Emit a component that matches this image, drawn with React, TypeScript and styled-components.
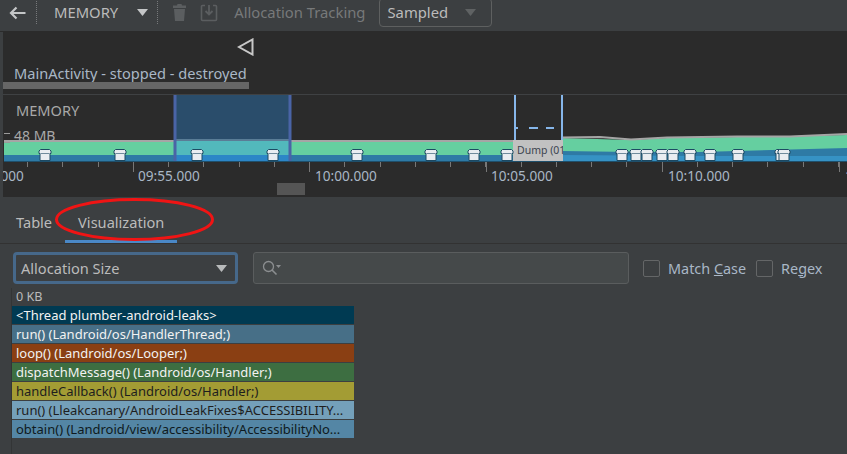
import styled, { createGlobalStyle } from 'styled-components';

const GlobalStyle = createGlobalStyle`
  html, body {
    margin: 0;
    padding: 0;
    background: #3c3f41;
  }
  * {
    box-sizing: border-box;
  }
`;

const Page = styled.div`
  width: 847px;
  height: 454px;
  overflow: hidden;
  display: flex;
  flex-direction: column;
  background: #3c3f41;
  color: #bbbbbb;
  font-family: 'Noto Sans', 'Open Sans', sans-serif;
  font-size: 14.6px;
`;

const Toolbar = styled.div`
  height: 32px;
  flex: none;
  display: flex;
  align-items: center;
  padding: 0 0 6px 9px;
  border-bottom: 1px solid #2b2b2b;
  font-size: 14.8px;
  line-height: 20px;
`;

const ToolbarIcon = styled.svg<{ $left?: number; $gap?: number }>`
  flex: none;
  margin-left: ${(p) => p.$left ?? 0}px;
  margin-right: ${(p) => p.$gap ?? 0}px;
`;

const DottedSep = styled.div`
  width: 1px;
  height: 23px;
  flex: none;
  border-left: 1px dotted #77797b;
`;

const ToolbarLabel = styled.span<{ $muted?: boolean; $left?: number; $gap?: number }>`
  white-space: nowrap;
  margin-left: ${(p) => p.$left ?? 0}px;
  margin-right: ${(p) => p.$gap ?? 0}px;
  padding-bottom: 2px;
  color: ${(p) => (p.$muted ? '#77797a' : '#bbbbbb')};
`;

const SmallSelect = styled.div`
  width: 113px;
  height: 29px;
  margin-left: 14px;
  flex: none;
  display: flex;
  align-items: center;
  justify-content: space-between;
  padding: 0 15px 0 7px;
  border: 1px solid #5e6060;
  border-radius: 4px;
`;

const SessionPanel = styled.div`
  height: 63px;
  flex: none;
  margin-left: 3px;
  background: #2b2b2b;
  display: flex;
  flex-direction: column;
  border-bottom: 1px solid #3f4143;
`;

const EventMark = styled.svg`
  margin: 6px 0 0 234px;
  flex: none;
`;

const ActivityLabel = styled.div`
  margin: 9px 0 0 11px;
  line-height: 17px;
  white-space: nowrap;
  color: #a9b7c6;
`;

const ActivityBar = styled.div`
  width: 246px;
  height: 7px;
  flex: none;
  background: #666666;
`;

const Timeline = styled.div`
  height: 102px;
  flex: none;
  margin-left: 3px;
  position: relative;
  overflow: hidden;
  background: #2b2b2b;
`;

const ChartSvg = styled.svg`
  position: absolute;
  left: -3px;
  top: 0;
`;

const MemoryTitle = styled.span`
  position: absolute;
  left: 13px;
  top: 5px;
  color: #a8a8a8;
`;

const ScaleLabel = styled.span`
  position: absolute;
  left: 11px;
  top: 33px;
  font-size: 14px;
  line-height: 16px;
  color: #a8a8a8;
`;

const TimeLabel = styled.span<{ $x: number }>`
  position: absolute;
  left: ${(p) => p.$x - 3}px;
  top: 72px;
  font-size: 13.6px;
  line-height: 18px;
  white-space: nowrap;
  color: #a9b7c6;
`;

const DumpLabel = styled.span`
  position: absolute;
  left: 511px;
  top: 47px;
  width: 49px;
  overflow: hidden;
  white-space: nowrap;
  font-size: 10.5px;
  line-height: 16px;
  padding-left: 3px;
  color: #3c4450;
`;

const Thumb = styled.div`
  position: absolute;
  left: 274px;
  top: 88px;
  width: 28px;
  height: 12px;
  background: #555555;
`;

const Details = styled.div`
  flex: 1;
  position: relative;
  display: flex;
  flex-direction: column;
`;

const TabBar = styled.div`
  height: 47px;
  flex: none;
  display: flex;
  border-bottom: 1px solid #323232;
  padding-left: 3px;
`;

const Tab = styled.div<{ $active?: boolean }>`
  display: flex;
  align-items: center;
  height: 46px;
  padding: 6px 13px 0;
  border-bottom: 3px solid ${(p) => (p.$active ? '#4a88c7' : 'transparent')};
`;

const FilterRow = styled.div`
  height: 44px;
  flex: none;
  display: flex;
  align-items: center;
  padding: 4px 0 0 13px;
`;

const ComboBox = styled.div`
  width: 225px;
  height: 32px;
  flex: none;
  display: flex;
  align-items: center;
  justify-content: space-between;
  padding: 0 8px 0 5px;
  border: 3px solid #46688a;
  border-radius: 4px;
`;

const SearchBox = styled.div`
  width: 376px;
  height: 32px;
  flex: none;
  margin: 0 14px 0 15px;
  display: flex;
  align-items: center;
  padding-left: 8px;
  background: #45494a;
  border: 1px solid #5a5d5e;
  border-radius: 3px;
`;

const CheckOption = styled.label`
  display: flex;
  align-items: center;
  gap: 8px;
  margin-right: 10px;
  font-size: 14.4px;
  white-space: nowrap;
  color: #a9b7c6;
`;

const CheckMark = styled.span`
  width: 17px;
  height: 17px;
  flex: none;
  border: 1px solid #646667;
  border-radius: 2px;
  background: #3c3f41;
`;

const FlameArea = styled.div`
  margin-left: 11px;
  border-left: 1px solid #333536;
  flex: 1;
`;

const ScaleText = styled.div`
  margin-left: 4px;
  font-size: 12.6px;
  line-height: 17px;
  height: 18px;
`;

const FlameRows = styled.div`
  width: 342px;
  display: flex;
  flex-direction: column;
  gap: 1px;
`;

const FlameRow = styled.div<{ $bg: string; $ink: string }>`
  height: 18px;
  padding: 0 4px;
  line-height: 18px;
  font-size: 13px;
  background: ${(p) => p.$bg};
  color: ${(p) => p.$ink};
  white-space: nowrap;
  overflow: hidden;
  text-overflow: ellipsis;
`;

const CallOut = styled.svg`
  position: absolute;
  left: 50px;
  top: 0;
`;

const TICKS = Array.from({ length: 24 }, (_, i) => 27 + i * 35.25);
const LONG_TICKS = [133, 309, 486, 662, 839];
const MARKERS = [45, 120, 197, 273, 357, 431, 474, 507, 622, 636, 647, 662, 673, 690, 710, 738, 781, 784];
const TIMES: [string, number][] = [
  ['09:50.000', -38],
  ['09:55.000', 138],
  ['10:00.000', 315],
  ['10:05.000', 491],
  ['10:10.000', 668],
  ['10:15.000', 845],
];
const FRAMES = [
  { bg: '#003a52', ink: '#f2f2f2', text: '<Thread plumber-android-leaks>' },
  { bg: '#476f87', ink: '#f2f2f2', text: 'run() (Landroid/os/HandlerThread;)' },
  { bg: '#8a3f13', ink: '#f2f2f2', text: 'loop() (Landroid/os/Looper;)' },
  { bg: '#3d6e41', ink: '#f2f2f2', text: 'dispatchMessage() (Landroid/os/Handler;)' },
  { bg: '#a39c34', ink: '#1e1e1e', text: 'handleCallback() (Landroid/os/Handler;)' },
  { bg: '#74a0ba', ink: '#1e1e1e', text: 'run() (Lleakcanary/AndroidLeakFixes$ACCESSIBILITY...' },
  { bg: '#5486a5', ink: '#0f1a20', text: 'obtain() (Landroid/view/accessibility/AccessibilityNo...' },
];

const Caret = ({ color, gap }: { color: string; gap?: number }) => (
  <ToolbarIcon width="11" height="7" viewBox="0 0 11 7" $gap={gap}>
    <path d="M0 0h11L5.500 7z" fill={color} />
  </ToolbarIcon>
);

const MemoryChart = () => (
  <ChartSvg width="847" height="102" viewBox="0 95 847 102">
    <path d="M4 141H514V162H4z" fill="#65cfa0" />
    <path d="M4 155H514V162H4z" fill="#2e7aa5" />
    <path d="M562 138L631 140L667 138L737 137L847 135V162H562z" fill="#65cfa0" />
    <path d="M562 151L631 152L700 152L847 148V162H562z" fill="#2e7aa5" />
    <path d="M562 155L700 156L847 156V162H562z" fill="#3692c4" />
    <path d="M4 141H514" stroke="#a5a5a5" strokeWidth="2" />
    <path d="M562 137.500L600 137L631 139.500L667 137.500L737 136.500L790 136.500L847 134" stroke="#a5a5a5" strokeWidth="2" fill="none" />
    <path d="M176 95H289V141H176z" fill="#2a4d6b" />
    <path d="M176 141H289V155H176z" fill="#52b9bc" />
    <path d="M176 155H289V162H176z" fill="#2c86c7" />
    <path d="M176 140H289" stroke="#5a7d96" strokeWidth="2" />
    <path d="M175 95V161M290 95V161" stroke="#4a64a6" strokeWidth="3" />
    <path d="M515 95V140M562 95V140" stroke="#86b6ea" strokeWidth="2" />
    <path d="M516 128H518M529 128H538M546 128H554" stroke="#86b6ea" strokeWidth="2" />
    <path d="M513 140H563V162H513z" fill="#c1c1c1" />
    <path d="M4 161.500H847" stroke="#1f4f6b" strokeWidth="1" />
    {MARKERS.map((x, i) => (
      <g key={i} transform={`translate(${x - 6.5} 149)`}>
        <path d="M2 .500h9l1.500 1.500v2.500h-1v7h-10v-7h-1V2z" fill="#e9edf1" stroke="#1d4a63" />
        <path d="M2 4.500h9" stroke="#6f8b9c" />
      </g>
    ))}
    <path d="M4 133.500H10M4 142.500H10" stroke="#9a9a9a" />
    {TICKS.map((x) => (
      <path key={x} d={`M${Math.round(x) + 0.5} 162V167`} stroke="#777777" />
    ))}
    {LONG_TICKS.map((x) => (
      <path key={x} d={`M${x + 0.500} 162V172`} stroke="#777777" />
    ))}
  </ChartSvg>
);

export default function App() {
  return (
    <Page>
      <GlobalStyle />
      <Toolbar>
        <ToolbarIcon width="17" height="14" viewBox="0 0 17 14" $gap={10}>
          <path d="M16.500 7H2M7.500 1.500L2 7l5.500 5.500" fill="none" stroke="#c4c6c7" strokeWidth="2.200" />
        </ToolbarIcon>
        <DottedSep />
        <ToolbarLabel $left={17} $gap={19}>MEMORY</ToolbarLabel>
        <Caret color="#c4c6c7" gap={9} />
        <DottedSep />
        <ToolbarIcon width="13" height="17" viewBox="0 0 13 17" $left={15} $gap={14}>
          <path d="M4.500 0h4l.5 1.500h4V4H0V1.500h4zM1 5h11l-1 12H2z" fill="#5b5e60" />
        </ToolbarIcon>
        <ToolbarIcon width="18" height="18" viewBox="0 0 18 18" $gap={16}>
          <path d="M5 1.500H2.500a1 1 0 0 0-1 1v13a1 1 0 0 0 1 1h13a1 1 0 0 0 1-1v-13a1 1 0 0 0-1-1H13" fill="none" stroke="#5b5e60" strokeWidth="1.600" />
          <path d="M9 1v9M5.500 7L9 10.500 12.500 7" fill="none" stroke="#5b5e60" strokeWidth="1.800" />
        </ToolbarIcon>
        <ToolbarLabel $muted>Allocation Tracking</ToolbarLabel>
        <SmallSelect>
          <ToolbarLabel>Sampled</ToolbarLabel>
          <Caret color="#5f6263" />
        </SmallSelect>
      </Toolbar>

      <SessionPanel>
        <EventMark width="17" height="18" viewBox="0 0 17 18">
          <path d="M15.500 1.500V16.500L2 9z" fill="none" stroke="#c8c8c8" strokeWidth="2" />
        </EventMark>
        <ActivityLabel>MainActivity - stopped - destroyed</ActivityLabel>
        <ActivityBar />
      </SessionPanel>

      <Timeline>
        <MemoryChart />
        <MemoryTitle>MEMORY</MemoryTitle>
        <ScaleLabel>48 MB</ScaleLabel>
        <DumpLabel>Dump (01.</DumpLabel>
        {TIMES.map(([label, x]) => (
          <TimeLabel key={label} $x={x}>
            {label}
          </TimeLabel>
        ))}
        <Thumb />
      </Timeline>

      <Details>
        <TabBar>
          <Tab>Table</Tab>
          <Tab $active>Visualization</Tab>
        </TabBar>
        <FilterRow>
          <ComboBox>
            <span>Allocation Size</span>
            <Caret color="#b8babb" />
          </ComboBox>
          <SearchBox>
            <svg width="20" height="16" viewBox="0 0 20 16">
              <circle cx="6.500" cy="6.500" r="5" fill="none" stroke="#8b8e90" strokeWidth="1.300" />
              <path d="M10 10l4.500 4.500" stroke="#8b8e90" strokeWidth="1.600" />
              <path d="M14 5h5l-2.500 3z" fill="#8b8e90" />
            </svg>
          </SearchBox>
          <CheckOption>
            <CheckMark />
            <span>
              Match <u>C</u>ase
            </span>
          </CheckOption>
          <CheckOption>
            <CheckMark />
            <span>
              Re<u>g</u>ex
            </span>
          </CheckOption>
        </FilterRow>
        <FlameArea>
          <ScaleText>0 KB</ScaleText>
          <FlameRows>
            {FRAMES.map((f) => (
              <FlameRow key={f.text} $bg={f.bg} $ink={f.ink}>
                {f.text}
              </FlameRow>
            ))}
          </FlameRows>
        </FlameArea>
        <CallOut width="170" height="50" viewBox="0 0 170 50">
          <ellipse cx="84.500" cy="22.500" rx="78" ry="20" fill="none" stroke="#f01414" strokeWidth="3" />
        </CallOut>
      </Details>
    </Page>
  );
}
